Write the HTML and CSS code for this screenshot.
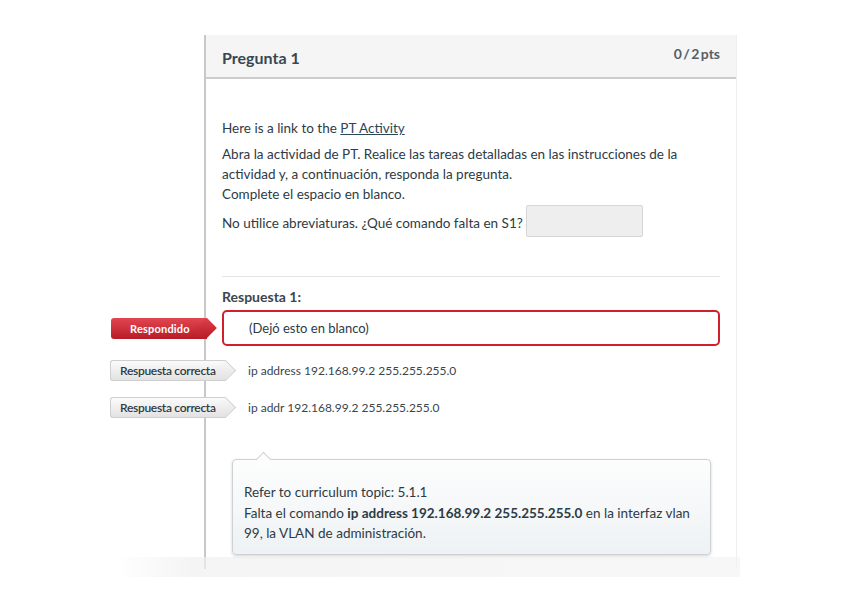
FILE: index.html
```html
<!DOCTYPE html>
<html>
<head>
    <link rel="stylesheet" href="styles.css">
</head>
<body>
<div class="page">
    <div class="quiz-card">
        <div class="quiz-card__header">
            <span class="quiz-card__title">Pregunta 1</span>
            <span class="quiz-card__points">0 / 2 pts</span>
        </div>

        <div class="quiz-card__body">
            <p class="question-text">Here is a link to the <a href="#" class="question-link">PT Activity</a></p>
            <p class="question-text">Abra la actividad de PT. Realice las tareas detalladas en las instrucciones de la actividad y, a continuación, responda la pregunta.<br>Complete el espacio en blanco.</p>
            <p class="question-text question-text--blank"><span>No utilice abreviaturas. ¿Qué comando falta en S1?</span> <span class="blank-input"></span></p>

            <div class="answers">
                <div class="answers__title">Respuesta 1:</div>

                <div class="answer-row">
                    <span class="tag tag--given">Respondido</span>
                    <div class="answer-box">(Dejó esto en blanco)</div>
                </div>

                <div class="answer-row answer-row--correct">
                    <span class="tag tag--correct">Respuesta correcta</span>
                    <span class="answer-text">ip address 192.168.99.2 255.255.255.0</span>
                </div>

                <div class="answer-row answer-row--correct">
                    <span class="tag tag--correct">Respuesta correcta</span>
                    <span class="answer-text">ip addr 192.168.99.2 255.255.255.0</span>
                </div>
            </div>

            <div class="feedback">
                Refer to curriculum topic: 5.1.1<br>
                Falta el comando <b>ip address 192.168.99.2 255.255.255.0</b> en la interfaz vlan 99, la VLAN de administración.
            </div>
        </div>
    </div>
    <div class="page-fade"></div>
</div>
</body>
</html>
```

FILE: styles.css
```css
html, body {
    margin: 0;
    background-color: #ffffff;
    font-family: Lato, "Open Sans", sans-serif;
    color: #2d3b45;
}

.page {
    padding-top: 35px;
}

.quiz-card {
    margin-left: 204px;
    width: 530px;
    border-left: 2px solid #c8c8c8;
    border-right: 1px solid #eeeeee;
}

.quiz-card__header {
    display: flex;
    justify-content: space-between;
    align-items: center;
    height: 42px;
    padding: 0 16px 0 16px;
    background-color: #f5f5f5;
    border-bottom: 2px solid #cccccc;
}

.quiz-card__title {
    font-size: 16px;
    font-weight: bold;
    color: #3b4650;
    margin-top: 2px;
}

.quiz-card__points {
    font-size: 14px;
    font-weight: bold;
    color: #555f68;
    margin-top: -6px;
    word-spacing: -2px;
}

.quiz-card__body {
    padding: 39px 16px 14px 16px;
}

.question-text {
    margin: 0 0 6px 0;
    font-size: 13.5px;
    line-height: 20px;
}

.question-text--blank {
    display: flex;
    align-items: center;
    gap: 3px;
    margin-top: -5px;
}

.question-text--blank span:first-child {
    padding-top: 3px;
}

.question-link {
    color: #2b4657;
    text-decoration: underline;
}

.blank-input {
    display: inline-block;
    width: 115px;
    height: 30px;
    background-color: #eeeeee;
    border: 1px solid #d6d6d6;
    border-radius: 2px;
}

.answers {
    margin-top: 39px;
    border-top: 1px solid #e4e4e4;
    padding-top: 10px;
}

.answers__title {
    font-size: 14px;
    font-weight: bold;
    color: #3b4650;
    line-height: 20px;
    margin-bottom: 3px;
}

.answer-row {
    display: flex;
    align-items: center;
    margin-left: -111px;
}

.answer-row--correct {
    height: 21px;
    margin-top: 14px;
}

.answer-row--correct + .answer-row--correct {
    margin-top: 16px;
}

.tag {
    position: relative;
    display: flex;
    align-items: center;
    height: 21px;
    box-sizing: border-box;
    font-size: 12px;
    white-space: nowrap;
}

.tag--given {
    width: 96px;
    margin-right: 15px;
    padding-left: 19px;
    color: #ffffff;
    font-weight: bold;
    background: linear-gradient(#e24650, #b71c26);
    border-radius: 3px 0 0 3px;
    letter-spacing: 0.2px;
    font-size: 11px;
}

.tag--given::after {
    content: "";
    position: absolute;
    right: -7px;
    top: 3px;
    width: 14px;
    height: 14px;
    transform: rotate(45deg);
    background: linear-gradient(135deg, #df404b, #b71c26);
}

.tag--correct {
    width: 116px;
    margin-left: -1px;
    margin-right: 22px;
    padding-left: 9px;
    color: #2f3a42;
    font-weight: 600;
    font-size: 12px;
    letter-spacing: -0.3px;
    background: linear-gradient(#fbfbfb, #e2e2e2);
    border: 1px solid #cfcfcf;
    border-right: none;
    border-radius: 3px 0 0 3px;
}

.tag--correct::after {
    content: "";
    position: absolute;
    right: -7px;
    top: 2px;
    width: 14px;
    height: 14px;
    transform: rotate(45deg);
    background: linear-gradient(135deg, #f8f8f8, #e2e2e2);
    border-top: 1px solid #cfcfcf;
    border-right: 1px solid #cfcfcf;
}

.answer-box {
    flex: 1;
    height: 36px;
    box-sizing: border-box;
    display: flex;
    align-items: center;
    padding-left: 25px;
    font-size: 13px;
    border: 2px solid #d0202d;
    border-radius: 5px;
}

.answer-text {
    font-size: 12px;
    color: #3a454e;
}

.feedback {
    position: relative;
    margin: 41px 9px 0 10px;
    padding: 22px 11px 10px 11px;
    font-size: 13.5px;
    line-height: 20.5px;
    color: #2d3b45;
    background: linear-gradient(#fdfdfd, #eef2f4);
    border: 1px solid #cdd2d5;
    border-radius: 4px;
    box-shadow: 0 1px 3px rgba(0, 0, 0, 0.18);
}

.feedback::before {
    content: "";
    position: absolute;
    left: 25px;
    top: -6px;
    width: 10px;
    height: 10px;
    transform: rotate(45deg);
    background-color: #fdfdfd;
    border-top: 1px solid #cdd2d5;
    border-left: 1px solid #cdd2d5;
}

.page-fade {
    margin: -12px 0 0 115px;
    width: 625px;
    height: 20px;
    background: linear-gradient(to right, rgba(240, 240, 240, 0), rgba(240, 240, 240, 0.7) 12%, rgba(244, 244, 244, 0.7));
}
```
